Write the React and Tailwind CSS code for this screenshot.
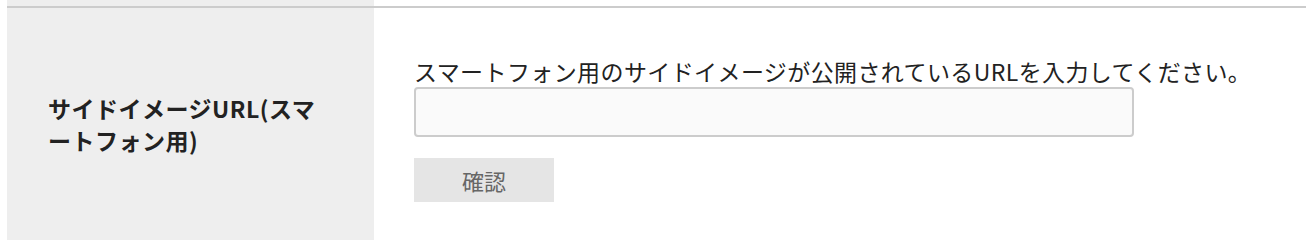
import React from 'react'

const font = { fontFamily: '"Noto Sans CJK JP", "Noto Sans", sans-serif' }

const App = () => {
  return (
    <div className="bg-white pl-[7px] text-[#222]" style={font}>
      {/* end of previous row */}
      <div className="flex h-[6px]">
        <div className="w-[367px] bg-[#eeeeee]"></div>
      </div>
      <div className="flex border-t-2 border-[#cccccc]">
        <div className="w-[367px] shrink-0 bg-[#eeeeee] flex items-center px-[41px]">
          <p className="text-[23px] leading-[32px] font-bold tracking-[0.5px]">サイドイメージURL(スマートフォン用)</p>
        </div>
        <div className="pl-[40px] pt-[47px] pb-[38px]">
          <p className="text-[23px] leading-[32px] tracking-[0.4px]">スマートフォン用のサイドイメージが公開されているURLを入力してください。</p>
          <input type="text" className="block w-[720px] h-[50px] border-2 border-[#cccccc] rounded-[4px] bg-[#fafafa] px-3 outline-none" />
          <button className="mt-[21px] w-[140px] h-[44px] bg-[#e5e5e5] text-[#666666] text-[22px]">確認</button>
        </div>
      </div>
    </div>
  )
}

export default App
